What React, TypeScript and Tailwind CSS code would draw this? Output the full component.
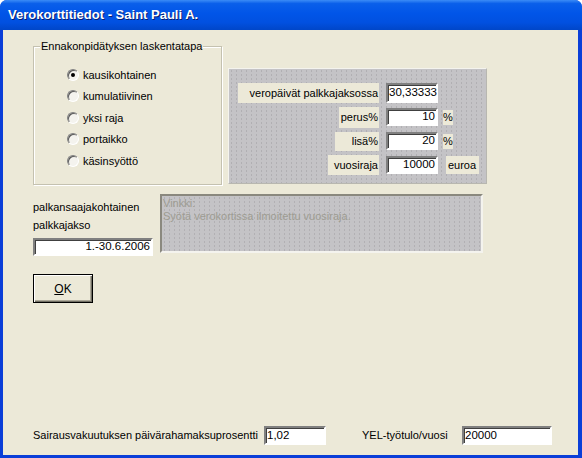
import React from 'react';

const font = "font-['Liberation_Sans',Arial,sans-serif]";

const sunken =
  'border-2 border-t-[#808080] border-l-[#808080] border-b-white border-r-white shadow-[inset_1px_1px_0_#404040] bg-white';

const methods = ['kausikohtainen', 'kumulatiivinen', 'yksi raja', 'portaikko', 'käsinsyöttö'];

function Radio({ label, checked }: { label: string; checked?: boolean }) {
  return (
    <div className="flex items-center h-[21.5px]">
      <span className="w-[12px] h-[12px] rounded-full border border-t-[#808080] border-l-[#808080] border-b-white border-r-white bg-[#f4f3ee] shadow-[inset_1px_1px_0_#5a5a5a] flex items-center justify-center">
        {checked && <span className="w-[4px] h-[4px] rounded-full bg-black" />}
      </span>
      <span className="ml-[4px] text-[11px] text-black">{label}</span>
    </div>
  );
}

function Field({ value, className, align = 'right' }: { value: string; className: string; align?: 'left' | 'right' }) {
  return (
    <div
      className={`${sunken} ${className} flex items-center px-[1px] text-[11.5px] leading-none text-black ${
        align === 'right' ? 'justify-end' : 'justify-start'
      }`}
    >
      {value}
    </div>
  );
}

function Tag({ children, className }: { children: React.ReactNode; className: string }) {
  return (
    <div className={`bg-[#ece9d8] text-[11px] text-black flex items-center justify-end pr-[1px] ${className}`}>
      {children}
    </div>
  );
}

export default function App() {
  return (
    <div className={`${font} w-[582px] h-[458px] bg-[#0a3ed8] flex flex-col rounded-t-[7px] overflow-hidden`}>
      {/* title bar */}
      <div className="h-[30px] shrink-0 bg-[linear-gradient(180deg,#3b8cf6_0%,#0a5fea_12%,#0155e8_45%,#0150e0_75%,#0046c8_100%)] flex items-center pl-[8px]">
        <span className="text-white font-bold text-[13px] [text-shadow:1px_1px_0_#0a1e6e]">
          Verokorttitiedot - Saint Pauli A.
        </span>
      </div>

      {/* body */}
      <div className="flex-1 mx-[3px] mb-[3px] mr-[4px] bg-[#ece9d8] flex flex-col pl-[30px] pt-[16px] pb-[10px]">
        <div className="flex items-start">
          {/* group box */}
          <div className="relative w-[189px] h-[139px] border border-[#c4c1b0] shadow-[inset_1px_1px_0_#fff,1px_1px_0_#fff] pl-[33px] pt-[17px]">
            <span className="absolute -top-[8px] left-[6px] bg-[#ece9d8] px-[1px] text-[11px] text-black leading-[14px]">
              Ennakonpidätyksen laskentatapa
            </span>
            {methods.map((m, i) => (
              <Radio key={m} label={m} checked={i === 0} />
            ))}
          </div>

          {/* grey parameters panel */}
          <div className="ml-[6px] mt-[22px] w-[259px] h-[116px] bg-[#c4c3c6] bg-[radial-gradient(#aeadb0_0.6px,transparent_0.8px)] bg-[length:5px_4px] border-t border-l border-t-[#f4f3ee] border-l-[#f4f3ee] border-b border-r border-b-[#b8b7b0] border-r-[#b8b7b0] pt-[14px] flex flex-col gap-[4px]">
            <div className="flex items-center h-[20px]">
              <Tag className="ml-[9px] w-[141px] h-[20px]">veropäivät palkkajaksossa</Tag>
              <Field value="30,33333" align="left" className="ml-[7px] w-[52px] h-[20px]" />
            </div>
            <div className="flex items-center h-[20px]">
              <Tag className="ml-[110px] w-[40px] h-[21px]">perus%</Tag>
              <Field value="10" className="ml-[7px] w-[52px] h-[18px]" />
              <Tag className="ml-[5px] w-[10px] h-[15px] justify-start!">%</Tag>
            </div>
            <div className="flex items-center h-[20px]">
              <Tag className="ml-[106px] w-[44px] h-[19px]">lisä%</Tag>
              <Field value="20" className="ml-[7px] w-[52px] h-[18px]" />
              <Tag className="ml-[5px] w-[10px] h-[15px] justify-start!">%</Tag>
            </div>
            <div className="flex items-center h-[20px]">
              <Tag className="ml-[99px] w-[51px] h-[20px]">vuosiraja</Tag>
              <Field value="10000" className="ml-[7px] w-[52px] h-[18px]" />
              <Tag className="ml-[8px] w-[33px] h-[18px] justify-center!">euroa</Tag>
            </div>
          </div>
        </div>

        {/* second row */}
        <div className="flex items-start mt-[9px]">
          <div className="w-[120px] pt-[4px] flex flex-col">
            <span className="text-[11px] text-black leading-[18px]">palkansaajakohtainen</span>
            <span className="text-[11px] text-black leading-[18px]">palkkajakso</span>
            <Field value="1.-30.6.2006" className="mt-[4px] w-[120px] h-[18px]" />
          </div>
          <div className="ml-[7px] w-[323px] h-[59px] bg-[#c4c3c6] bg-[radial-gradient(#afaeb1_0.6px,transparent_0.8px)] bg-[length:5px_4px] border-2 border-t-[#8a887e] border-l-[#8a887e] border-b-[#f4f3ee] border-r-[#f4f3ee] pl-[1px] pt-[1px] text-[11px] leading-[13px] text-[#9d9c92]">
            <div>Vinkki:</div>
            <div>Syötä verokortissa ilmoitettu vuosiraja.</div>
          </div>
        </div>

        {/* OK button */}
        <button className="mt-[18px] w-[60px] h-[29px] border border-black bg-[#ece9d8] shadow-[inset_1px_1px_0_#fff,inset_-1px_-1px_0_#716f64,inset_-2px_-2px_0_#aca899] text-[12px] text-black flex items-center justify-center">
          <span>
            <span className="underline">O</span>K
          </span>
        </button>

        {/* bottom row */}
        <div className="mt-auto flex items-center">
          <span className="text-[11px] text-black w-[231px]">Sairausvakuutuksen päivärahamaksuprosentti</span>
          <Field value="1,02" align="left" className="w-[62px] h-[19px]" />
          <span className="ml-[36px] w-[100px] text-[11px] text-black">YEL-työtulo/vuosi</span>
          <Field value="20000" align="left" className="w-[90px] h-[19px]" />
        </div>
      </div>
    </div>
  );
}
